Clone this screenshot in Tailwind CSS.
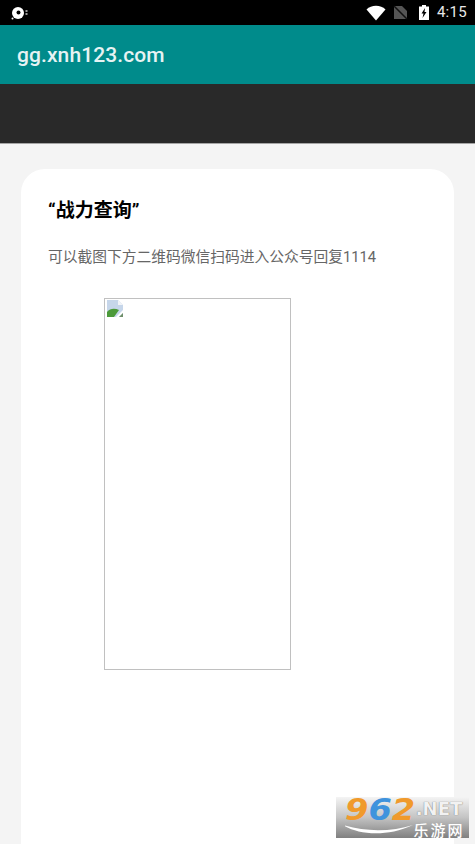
<!DOCTYPE html>
<html lang="en">
  <head>
    <meta charset="UTF-8" />
    <meta name="viewport" content="width=device-width, initial-scale=1.0" />
    <title>gg.xnh123.com</title>
    <script src="https://cdn.jsdelivr.net/npm/@tailwindcss/browser@4"></script>
  </head>
  <body class="relative h-[844px] w-[475px] overflow-hidden bg-[#f4f4f4] font-['Roboto','Noto_Sans_CJK_SC',sans-serif]">
    <!-- status bar -->
    <div class="flex h-[25px] items-center justify-between bg-black pl-[10px] pr-[8px]">
      <svg width="18" height="16" viewBox="0 0 18 16">
        <circle cx="8" cy="8" r="6" fill="#fff" />
        <circle cx="8.500" cy="7.500" r="2" fill="#000" />
        <circle cx="2.500" cy="13.500" r="1" fill="#fff" />
        <rect x="15.500" y="5" width="2" height="2" fill="#999" />
        <rect x="15.500" y="8" width="2" height="2" fill="#999" />
      </svg>
      <div class="flex items-center">
        <svg width="20" height="16" viewBox="0 0 20 16" class="mr-[7px]">
          <path d="M0.500 4.500C3 2 6.300 0.800 10 0.800s7 1.200 9.500 3.700L10 15.500z" fill="#fff" />
        </svg>
        <svg width="15" height="15" viewBox="0 0 15 15" class="mr-[11px]">
          <path d="M1 14V1h8l5 5v8z" fill="#555" />
          <path d="M1 1l13 13" stroke="#111" stroke-width="1.500" />
        </svg>
        <svg width="10" height="15" viewBox="0 0 10 15" class="mr-[8px]">
          <path d="M3 0h4v1.500h3V15H0V1.500h3z" fill="#fff" />
          <path d="M6 3L2.500 8.500h2L3.500 13 7.500 7h-2z" fill="#000" />
        </svg>
        <span class="text-[15px] leading-none tracking-[0.3px] text-[#e8e8e8]">4:15</span>
      </div>
    </div>

    <!-- app bar -->
    <div class="flex h-[59px] items-center bg-[#008b8b] px-[17px] pt-[2px]">
      <span class="text-[21px] font-medium leading-none tracking-[0.1px] text-[#e6f3f3]">gg.xnh123.com</span>
    </div>

    <!-- dark strip -->
    <div class="h-[60px] border-b border-[#a5a5a5] bg-[#292929]"></div>

    <!-- card -->
    <div class="mx-[21px] mt-[25px] h-[675px] w-[433px] rounded-t-[24px] bg-white px-[27px] pt-[29px]">
      <h1 class="pt-[1px] text-[19px] font-bold leading-[24px] text-black">“战力查询”</h1>
      <p class="mt-[23px] text-[14.75px] leading-[22px] text-[#666]">可以截图下方二维码微信扫码进入公众号回复1114</p>
      <div class="relative ml-[56px] mt-[30px] h-[372px] w-[187px] border border-[#c0c0c0]">
        <svg width="16" height="17" viewBox="0 0 16 17" class="absolute left-[2px] top-[1px]">
          <path d="M0 0h11l5 5v12H0z" fill="#c6d6ea" />
          <path d="M11 0l5 5h-5z" fill="#f1f4f8" />
          <path d="M0 17v-5c3-4 8-4 12-2l-5 7z" fill="#4c9a3a" />
          <path d="M16 10l-7 7h3l4-4z" fill="#fff" />
          <path d="M16 13l-4 4h4z" fill="#6f8f6a" />
        </svg>
      </div>
    </div>

    <!-- watermark -->
    <div class="absolute left-[336px] top-[797px] flex h-[41px] w-[133px] bg-gradient-to-b from-[#f4f4f4] via-[#c4c4c4] to-[#808080] pl-[9px]">
      <div class="relative w-[70px]">
        <span class="-mt-[3px] block origin-left scale-x-[1.12] font-['DejaVu_Sans',sans-serif] text-[30px] font-bold italic leading-[32px]"><span class="text-[#f09a2c]">9</span><span class="text-[#3f93dd]">6</span><span class="text-[#f09a2c]">2</span></span>
        <svg width="70" height="16" viewBox="0 0 70 16" class="absolute left-0 top-[25px]">
          <path d="M-2 3C12 12 40 16 68 3C46 10 20 10 -2 3z" fill="#fff" />
        </svg>
      </div>
      <div class="flex w-[48px] flex-col items-center pt-[3px]">
        <span class="font-['DejaVu_Sans',sans-serif] text-[18px] font-bold leading-[18px] text-[#f2f2f2] [text-shadow:0_0_1px_#555]">.NET</span>
        <span class="mt-[5px] whitespace-nowrap text-[15px] font-medium leading-[16px] tracking-[2px] text-white">乐游网</span>
      </div>
    </div>
  </body>
</html>
